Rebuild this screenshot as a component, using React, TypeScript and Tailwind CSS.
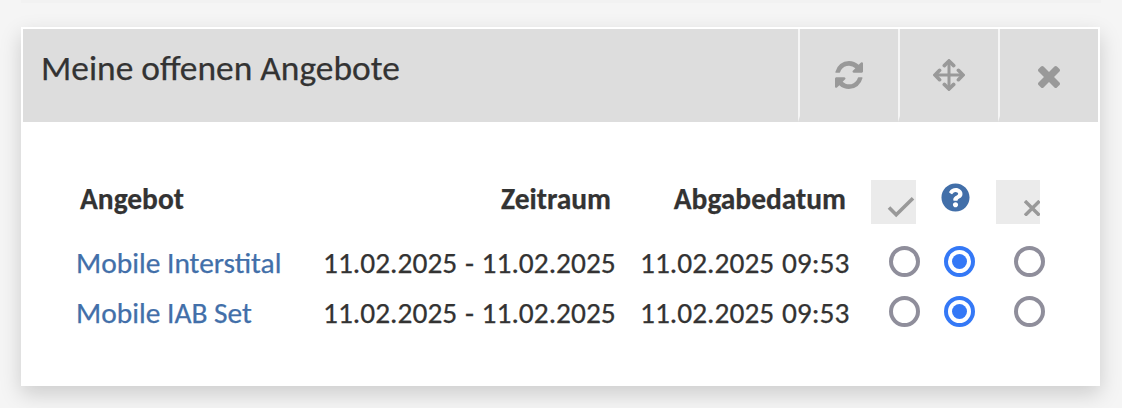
import React from 'react';
import { FaQuestionCircle } from 'react-icons/fa';

interface Offer {
  name: string;
  period: string;
  due: string;
}

const offers: Offer[] = [
  { name: 'Mobile Interstital', period: '11.02.2025 - 11.02.2025', due: '11.02.2025 09:53' },
  { name: 'Mobile IAB Set', period: '11.02.2025 - 11.02.2025', due: '11.02.2025 09:53' },
];

function RefreshIcon() {
  return (
    <svg viewBox="0 0 1536 1536" className="w-7 h-7" fill="currentColor">
      <path d="M1511 928q0 5-1 7-64 268-268 434.5t-478 166.5q-146 0-282.5-55t-243.5-157l-129 129q-19 19-45 19t-45-19-19-45v-448q0-26 19-45t45-19h448q26 0 45 19t19 45-19 45l-137 137q71 66 161 102t187 36q134 0 250-65t186-179q11-17 53-117 8-23 30-23h192q13 0 22.5 9.5t9.5 22.5zm25-800v448q0 26-19 45t-45 19h-448q-26 0-45-19t-19-45 19-45l138-138q-148-137-349-137-134 0-250 65t-186 179q-11 17-53 117-8 23-30 23h-199q-13 0-22.5-9.5t-9.5-22.5v-7q65-268 270-434.5t480-166.5q146 0 284 55.5t245 156.5l130-129q19-19 45-19t45 19 19 45z" />
    </svg>
  );
}

function MoveIcon() {
  return (
    <svg viewBox="0 0 32 32" className="w-8 h-8" fill="none" stroke="currentColor" strokeWidth="3" strokeLinecap="round">
      <path d="M16 3v26M3 16h26" />
      <path strokeWidth="3.6" d="M11.3 6.6 16 2 20.7 6.6M11.3 25.4 16 30 20.7 25.4M6.6 11.3 2 16 6.6 20.7M25.4 11.3 30 16 25.4 20.7" />
    </svg>
  );
}

function CloseIcon() {
  return (
    <svg viewBox="302 366 1188 1188" className="w-[22px] h-[22px]" fill="currentColor">
      <path d="M1490 1322q0 40-28 68l-136 136q-28 28-68 28t-68-28l-294-294-294 294q-28 28-68 28t-68-28l-136-136q-28-28-28-68t28-68l294-294-294-294q-28-28-28-68t28-68l136-136q28-28 68-28t68 28l294 294 294-294q28-28 68-28t68 28l136 136q28 28 28 68t-28 68l-294 294 294 294q28 28 28 68z" />
    </svg>
  );
}

function HeaderButton({ label, children }: { label: string; children: React.ReactNode }) {
  return (
    <button
      aria-label={label}
      className="w-[100px] h-[93px] flex items-center justify-center pt-[5px] border-l-2 border-l-[#f5f5f5] border-b-[6px] border-b-[#ddd] text-[#999]"
    >
      {children}
    </button>
  );
}

function Radio({ checked = false }: { checked?: boolean }) {
  return (
    <span
      role="radio"
      aria-checked={checked}
      className={
        checked
          ? 'w-[31px] h-[31px] rounded-full border-4 border-[#3478f6] flex items-center justify-center'
          : 'block w-[31px] h-[31px] rounded-full border-4 border-[#8f8e9b]'
      }
    >
      {checked && <span className="w-[15px] h-[15px] rounded-full bg-[#3478f6]" />}
    </span>
  );
}

export default function App() {
  return (
    <div className="h-[408px] overflow-hidden bg-[#f5f5f5] font-['Carlito','Lato',sans-serif] text-[#333] [-webkit-text-stroke:0.25px]">
      <div className="h-[3px] mx-[21px] bg-[#f2f2f2]" />
      <section className="mt-[24px] ml-[21px] w-[1079px] h-[359px] bg-white border-2 border-white shadow-[0_8px_20px_rgba(0,0,0,0.17)]">
        <header className="flex h-[93px] bg-[#ddd]">
          <h2 className="grow pl-[18px] pt-[19px] text-[35.45px] leading-[40px] whitespace-nowrap">Meine offenen Angebote</h2>
          <HeaderButton label="Aktualisieren"><RefreshIcon /></HeaderButton>
          <HeaderButton label="Verschieben"><MoveIcon /></HeaderButton>
          <HeaderButton label="Schließen"><div className="pt-[3px]"><CloseIcon /></div></HeaderButton>
        </header>

        <div className="pt-[58px] pl-[54px] text-[29.45px] leading-[40px] whitespace-nowrap">
          {/* Column heads */}
          <div className="flex h-[44px] font-bold">
            <div className="w-[233px] pl-[3px] -mt-px">Angebot</div>
            <div className="w-[301px] -mt-px text-right">Zeitraum</div>
            <div className="w-[235px] -mt-px text-right">Abgabedatum</div>
            <div className="ml-[25px] w-[45px] h-[44px] bg-[#ebebeb] text-[#999] flex justify-end pt-[16px] pr-[1px]">
              <svg viewBox="0 0 28 22" className="w-7 h-[22px]" fill="none" stroke="currentColor" strokeWidth="3.6">
                <path d="M2 11.5 9.2 18.8 26 2.2" />
              </svg>
            </div>
            <div className="ml-[25px] pt-[3px] w-[29px] text-[#426fa9]">
              <FaQuestionCircle className="w-[29px] h-[29px]" />
            </div>
            <div className="ml-[26px] w-[44px] h-[44px] bg-[#ebebeb] text-[#999] flex justify-end pt-[20px]">
              <svg viewBox="0 0 16 16" className="w-4 h-4" fill="none" stroke="currentColor" strokeWidth="3.4">
                <path d="M1 1 15.5 15.5M15.5 1 1 15.5" />
              </svg>
            </div>
          </div>

          <div className="pt-[14px]">
            {offers.map((offer) => (
              <div key={offer.name} className="flex items-center h-[50px]">
                <a href="#" className="w-[246px] -ml-px mr-px text-[#426fa9]">{offer.name}</a>
                <div className="w-[317px] [word-spacing:1px]">{offer.period}</div>
                <div className="w-[249px] [word-spacing:1px]">{offer.due}</div>
                <div className="flex pb-[4px]">
                  <Radio />
                  <div className="ml-[24px] mr-[39px]"><Radio checked /></div>
                  <Radio />
                </div>
              </div>
            ))}
          </div>
        </div>
      </section>
    </div>
  );
}
